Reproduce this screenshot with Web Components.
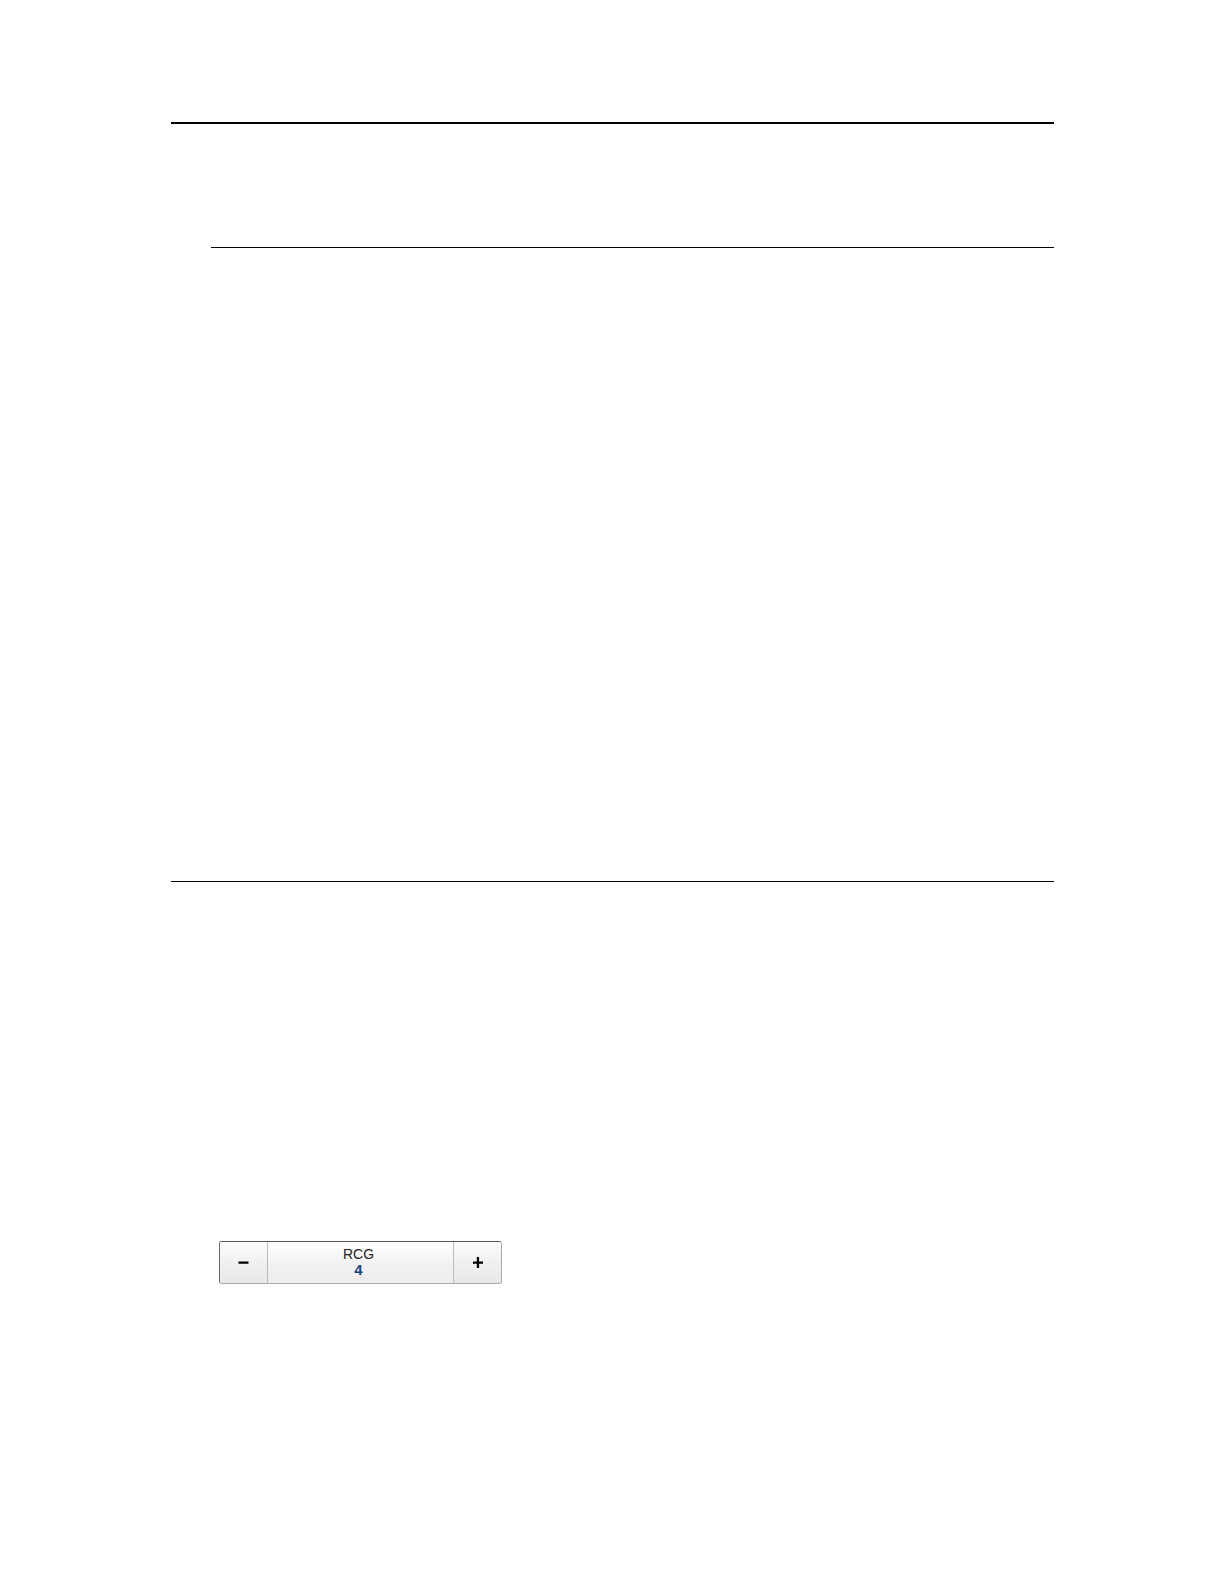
<!DOCTYPE html>
<html lang="en">
<head>
<meta charset="utf-8">
<meta name="viewport" content="width=device-width, initial-scale=1">
<title>RCG</title>
<style>
  body {
    margin: 0;
    background: #fff;
    font-family: "Liberation Sans", Arial, sans-serif;
    font-size: 14px;
    line-height: 16px;
    color: #222;
  }
</style>
</head>
<body>
  <manual-page>
    <page-section weight="thick" space="small"></page-section>
    <page-section indent space="large"></page-section>
    <page-section space="medium">
      <value-stepper label="RCG" value="4"></value-stepper>
    </page-section>
  </manual-page>

  <script>
  class ManualPage extends HTMLElement {
    constructor() {
      super();
      this.attachShadow({ mode: "open" }).innerHTML = `
        <style>
          :host {
            display: block;
            padding: 122px 170px 0 171px;
          }
        </style>
        <main><slot></slot></main>
      `;
    }
  }

  // A horizontal rule with the section's content below it
  class PageSection extends HTMLElement {
    constructor() {
      super();
      this.attachShadow({ mode: "open" }).innerHTML = `
        <style>
          :host {
            display: block;
          }
          hr {
            margin: 0;
            border: 0;
            border-top: 1px solid #000;
          }
          .content {
            padding-left: 48px;
          }
          :host([weight="thick"]) hr {
            border-top-width: 2px;
          }
          :host([indent]) hr {
            margin-left: 40px;
          }
          :host([space="small"]) .content {
            padding-top: 123px;
          }
          :host([space="medium"]) .content {
            padding-top: 359px;
            padding-bottom: 120px;
          }
          :host([space="large"]) .content {
            padding-top: 633px;
          }
        </style>
        <hr>
        <div class="content"><slot></slot></div>
      `;
    }
  }

  class ValueStepper extends HTMLElement {
    constructor() {
      super();
      this.attachShadow({ mode: "open" }).innerHTML = `
        <style>
          :host {
            display: block;
            max-width: 283px;
          }
          .stepper {
            display: grid;
            grid-template-columns: 48px 1fr 48px;
            box-sizing: border-box;
            height: 43px;
            border: 1px solid #aaa;
            border-top-color: #555;
            border-left-color: #666;
            border-radius: 3px;
            overflow: hidden;
            background: linear-gradient(#fff, #f1f1f1 55%, #eee);
          }
          button {
            display: flex;
            align-items: center;
            justify-content: center;
            margin: 0;
            padding: 0;
            border: 0;
            background: linear-gradient(#fdfdfd, #f0f0f0 50%, #e8e8e8);
            color: #000;
            cursor: pointer;
          }
          button:active {
            background: #ddd;
          }
          .minus {
            border-right: 1px solid #bbb;
          }
          .plus {
            border-left: 1px solid #bbb;
          }
          svg {
            display: block;
          }
          .reading {
            display: flex;
            flex-direction: column;
            align-items: center;
            justify-content: center;
            padding: 0 4px 2px 0;
          }
          output {
            color: #1b4480;
            font-size: 15px;
            font-weight: bold;
          }
        </style>
        <div class="stepper" role="group" aria-labelledby="label">
          <button class="minus" type="button" aria-label="Decrease">
            <svg width="11" height="11" viewBox="0 0 11 11"><path d="M.5 4.4h10v2.3H.5z"/></svg>
          </button>
          <div class="reading">
            <label id="label" for="value"></label>
            <output id="value"></output>
          </div>
          <button class="plus" type="button" aria-label="Increase">
            <svg width="11" height="11" viewBox="0 0 11 11"><path d="M4.8 0h2.3v4.4H11v2.3H7.1V11H4.8V6.7H1V4.4h3.8z"/></svg>
          </button>
        </div>
      `;
      this.shadowRoot.querySelector(".minus").addEventListener("click", () => this.step(-1));
      this.shadowRoot.querySelector(".plus").addEventListener("click", () => this.step(1));
    }

    connectedCallback() {
      this.shadowRoot.querySelector("label").textContent = this.getAttribute("label");
      this.step(0);
    }

    step(amount) {
      const value = Number(this.getAttribute("value")) + amount;
      this.setAttribute("value", value);
      this.shadowRoot.querySelector("output").textContent = value;
    }
  }

  customElements.define("manual-page", ManualPage);
  customElements.define("page-section", PageSection);
  customElements.define("value-stepper", ValueStepper);
  </script>
</body>
</html>
